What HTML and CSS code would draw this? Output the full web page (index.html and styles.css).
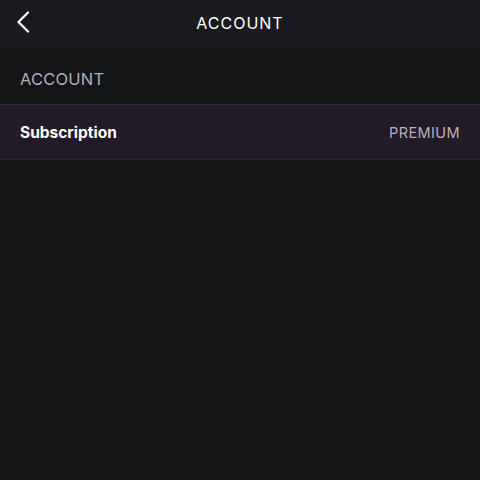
FILE: index.html
```html
<!DOCTYPE html>
<html>
<head>
<meta charset="utf-8">
<link rel="stylesheet" href="styles.css">
</head>
<body>
<header class="topbar">
  <button class="back" aria-label="Back">
    <svg width="14" height="22" viewBox="0 0 14 22"><path d="M12 1.5 L2.5 11 L12 20.5" fill="none" stroke="#fff" stroke-width="2.2" stroke-linecap="round" stroke-linejoin="round"/></svg>
  </button>
  <h1 class="title">ACCOUNT</h1>
</header>
<div class="section-label">ACCOUNT</div>
<div class="row">
  <span class="row-name">Subscription</span>
  <span class="row-value">PREMIUM</span>
</div>
</body>
</html>
```
FILE: styles.css
```css
html, body {
  margin: 0;
  padding: 0;
  background: #141517;
  font-family: "Inter", "Lato", "Liberation Sans", sans-serif;
  height: 100%;
}
.topbar {
  height: 49px;
  background: #1b1a1e;
  display: flex;
  align-items: center;
  justify-content: center;
  position: relative;
}
.back {
  position: absolute;
  left: 15px;
  top: 10px;
  background: none;
  border: 0;
  padding: 0;
  width: 16px;
  height: 24px;
  display: flex;
  align-items: center;
  justify-content: center;
}
.title {
  margin: 0;
  font-size: 16px;
  font-weight: 400;
  color: #ffffff;
  letter-spacing: 1px;
  padding-bottom: 4px;
}
.section-label {
  height: 55px;
  box-sizing: border-box;
  padding: 20px 20px 0;
  font-size: 16.5px;
  color: #b3adb8;
  letter-spacing: 0.2px;
}
.row {
  height: 56px;
  box-sizing: border-box;
  background: #221a26;
  border-top: 1px solid #3a2a3f;
  border-bottom: 1px solid #2b2230;
  display: flex;
  align-items: center;
  justify-content: space-between;
  padding: 0 20px 0 20px;
}
.row-name {
  color: #ffffff;
  font-weight: 700;
  font-size: 15.5px;
}
.row-value {
  color: #b8b0bd;
  font-size: 14.5px;
  letter-spacing: 0.4px;
}
```
